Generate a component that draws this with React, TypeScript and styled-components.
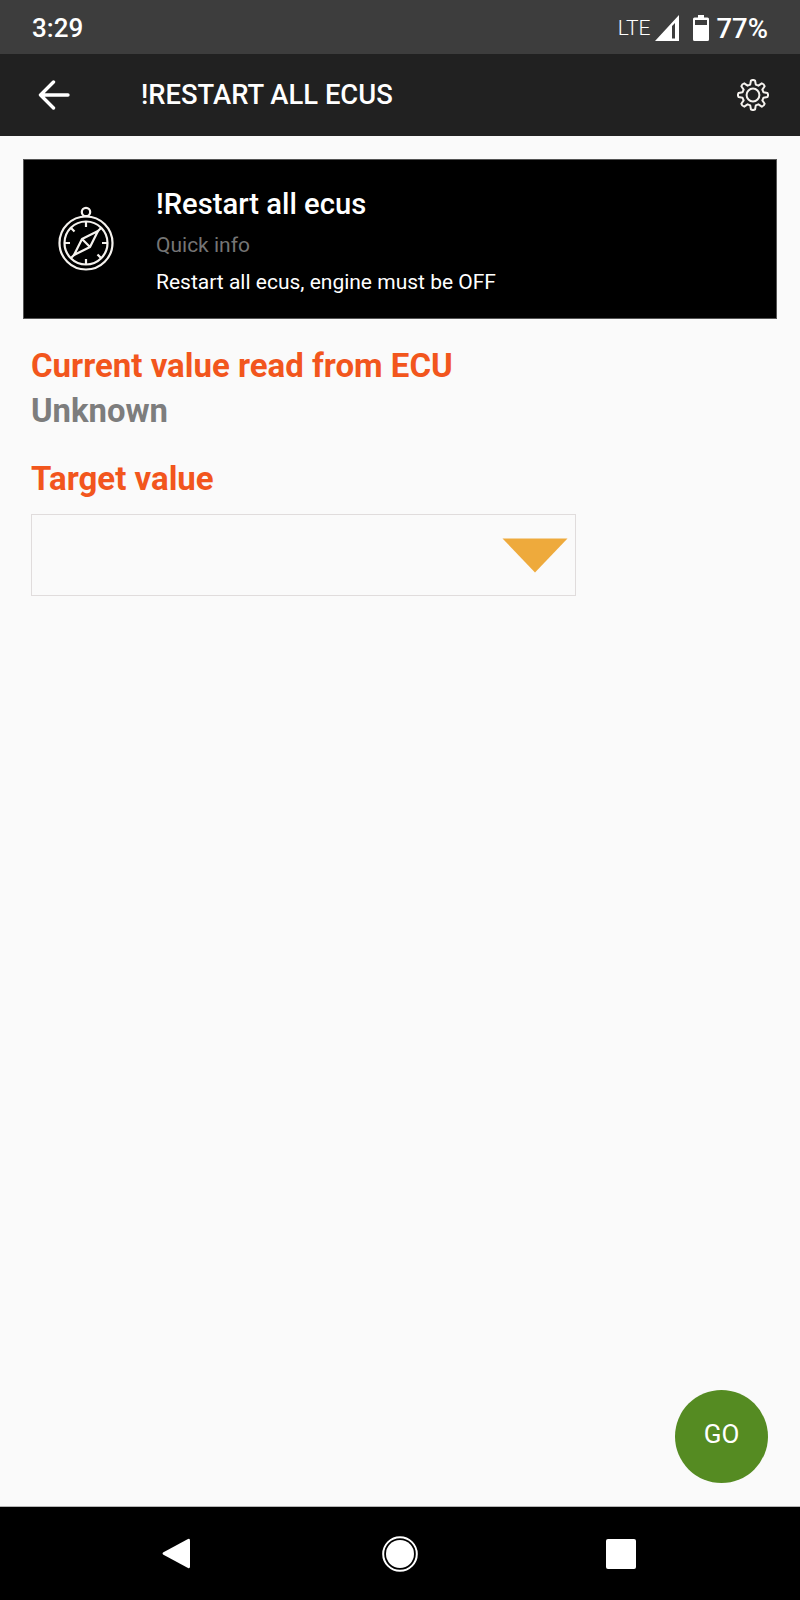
import React from "react"

import styled, { createGlobalStyle } from "styled-components"

const GlobalStyle = createGlobalStyle`
  html, body {
    margin: 0;
    padding: 0;
    background: #fafafa;
  }
  * {
    box-sizing: border-box;
  }
`

// eight lobes, walked round the centre of a 32 box
function gearPath() {
  const point = (deg: number, r: number) => {
    const rad = (deg * Math.PI) / 180
    return `${(16 + r * Math.sin(rad)).toFixed(2)} ${(16 - r * Math.cos(rad)).toFixed(2)}`
  }
  let d = ""
  for (let i = 0; i < 8; i++) {
    const a = i * 45
    d += `${i === 0 ? "M" : "L"}${point(a - 15, 10.8)} L${point(a - 8, 14.6)} Q${point(a, 15.6)} ${point(a + 8, 14.6)} L${point(a + 15, 10.8)} `
  }
  return d + "Z"
}

export default function App() {
  return (
    <Page>
      <GlobalStyle />
      <StatusBar>
        <Clock>3:29</Clock>
        <StatusRight>
          <Lte>LTE</Lte>
          <svg width="24" height="26" viewBox="0 0 24 26">
            <path d="M0 26 L24 0 V26 Z M17 11 L17 23.5 L20 23.5 L20 8 Z" fill="#fff" fillRule="evenodd" />
          </svg>
          <BatteryIcon width="16" height="26" viewBox="0 0 16 26">
            <path d="M5 0 H11 V2.5 H14.5 Q16 2.5 16 4 V24.5 Q16 26 14.5 26 H1.5 Q0 26 0 24.5 V4 Q0 2.5 1.5 2.5 H5 Z" fill="#fff" />
            <rect x="2" y="5" width="12" height="5" fill="#3d3d3d" />
          </BatteryIcon>
          <Percent>77%</Percent>
        </StatusRight>
      </StatusBar>
      <Toolbar>
        <ToolbarLeft>
          <svg width="32" height="30" viewBox="0 0 32 30" fill="none" stroke="#fff" strokeWidth="3.4" strokeLinecap="round" strokeLinejoin="round">
            <path d="M2.5 15 H30 M15.5 2 L2.5 15 L15.5 28" />
          </svg>
          <Title>!Restart all ecus</Title>
        </ToolbarLeft>
        <svg width="32" height="32" viewBox="0 0 32 32" fill="none" stroke="#f5f2ee" strokeWidth="2" strokeLinejoin="round">
          <path d={gearPath()} />
          <circle cx="16" cy="16" r="6.4" />
        </svg>
      </Toolbar>
      <Content>
        <InfoCard>
          <CompassBox>
            <svg width="56" height="66" viewBox="0 0 56 66" fill="none" stroke="#f5f2ee" strokeWidth="2.2">
              <circle cx="28" cy="37" r="26.5" />
              <circle cx="28" cy="37" r="21.5" />
              <circle cx="28" cy="6" r="4.2" />
              <path d="M28 15.5 V21 M28 53 V58.5 M6.5 37 H12 M44 37 H49.5 M13 22 L16.5 25.5 M43 22 L39.5 25.5 M13 52 L16.5 48.5 M43 52 L39.5 48.5" />
              <path d="M40 25 L32 41 L16 49 L24 33 Z M24 33 L32 41" strokeLinejoin="round" />
            </svg>
          </CompassBox>
          <InfoText>
            <InfoTitle>!Restart all ecus</InfoTitle>
            <InfoLabel>Quick info</InfoLabel>
            <InfoBody>Restart all ecus, engine must be OFF</InfoBody>
          </InfoText>
        </InfoCard>
        <Heading>Current value read from ECU</Heading>
        <CurrentValue>Unknown</CurrentValue>
        <TargetHeading>Target value</TargetHeading>
        <Dropdown>
          <svg width="66" height="35" viewBox="0 0 66 35">
            <path d="M0.5 0.5 H65.5 L33 34.5 Z" fill="#eeaa3c" />
          </svg>
        </Dropdown>
        <GoButton>GO</GoButton>
      </Content>
      <NavBar>
        <svg width="28" height="31" viewBox="0 0 28 31">
          <path d="M26 1 Q28 0 28 2.5 V28.5 Q28 31 26 30 L1 16.5 Q0 15.5 1 14.5 Z" fill="#fff" />
        </svg>
        <HomeIcon width="36" height="36" viewBox="0 0 36 36">
          <circle cx="18" cy="18" r="16.8" fill="none" stroke="#fff" strokeWidth="2" />
          <circle cx="18" cy="18" r="14" fill="#fff" />
        </HomeIcon>
        <NavSquare />
      </NavBar>
    </Page>
  )
}

const Page = styled.div`
  position: relative;
  display: flex;
  flex-direction: column;
  width: 800px;
  height: 1600px;
  font-family: Roboto, "Liberation Sans", sans-serif;
  background: #fafafa;
  overflow: hidden;
`

const StatusBar = styled.div`
  display: flex;
  flex: none;
  align-items: center;
  justify-content: space-between;
  height: 54px;
  padding: 2px 32px 0;
  background: #3d3d3d;
  color: #fff;
`

const Clock = styled.div`
  font-size: 26px;
  font-weight: 500;
`

const StatusRight = styled.div`
  display: flex;
  align-items: center;
`

const Lte = styled.div`
  margin-right: 5px;
  font-size: 21px;
  font-weight: 300;
`

const BatteryIcon = styled.svg`
  margin-left: 14px;
`

const Percent = styled.div`
  margin-left: 7px;
  font-size: 27.5px;
  font-weight: 500;
`

const Toolbar = styled.div`
  display: flex;
  flex: none;
  align-items: center;
  justify-content: space-between;
  height: 82px;
  padding: 0 31px 0 38px;
  background: #212121;
`

const ToolbarLeft = styled.div`
  display: flex;
  align-items: center;
  gap: 71px;
`

const Title = styled.div`
  color: #fff;
  font-size: 27.4px;
  font-weight: 500;
  text-transform: uppercase;
`

const Content = styled.div`
  position: relative;
  flex: 1;
  padding: 23px 23px 0;
`

const InfoCard = styled.div`
  display: flex;
  align-items: center;
  height: 160px;
  background: #000;
  border: 1px solid #555;
`

const CompassBox = styled.div`
  display: flex;
  flex: none;
  justify-content: center;
  width: 124px;
  margin: 0 8px 0 0;
`

const InfoText = styled.div`
  display: flex;
  flex-direction: column;
  padding-top: 5px;
`

const InfoTitle = styled.div`
  margin-top: -1px;
  color: #fff;
  font-size: 29.2px;
  font-weight: 500;
  line-height: 36px;
`

const InfoLabel = styled.div`
  margin-top: 9px;
  color: #757575;
  font-size: 21px;
  line-height: 28px;
`

const InfoBody = styled.div`
  margin-top: 9px;
  color: #fff;
  font-size: 21px;
  line-height: 28px;
`

const Heading = styled.div`
  margin: 27px 0 0 8px;
  color: #f2561d;
  font-size: 33px;
  font-weight: 700;
  line-height: 40px;
`

const TargetHeading = styled(Heading)`
  margin-top: 28px;
`

const CurrentValue = styled.div`
  margin: 5px 0 0 8px;
  color: #7d7d7d;
  font-size: 32.8px;
  font-weight: 700;
  line-height: 40px;
`

const Dropdown = styled.div`
  display: flex;
  align-items: center;
  justify-content: flex-end;
  width: 545px;
  height: 82px;
  margin: 15px 0 0 8px;
  padding: 0 7px 0 0;
  background: #fafafa;
  border: 1px solid #e0dcdc;
`

const GoButton = styled.div`
  position: absolute;
  right: 32px;
  bottom: 23px;
  display: flex;
  align-items: center;
  justify-content: center;
  width: 93px;
  height: 93px;
  padding-bottom: 5px;
  border-radius: 50%;
  background: #558b22;
  color: #fff;
  font-size: 26px;
`

const NavBar = styled.div`
  display: flex;
  flex: none;
  align-items: center;
  justify-content: space-between;
  height: 94px;
  padding: 0 164px 0 162px;
  background: #000;
  border-top: 1px solid #b5b5b5;
`

const HomeIcon = styled.svg`
  margin-left: 4px;
`

const NavSquare = styled.div`
  width: 30px;
  height: 30px;
  border-radius: 2px;
  background: #fff;
`
